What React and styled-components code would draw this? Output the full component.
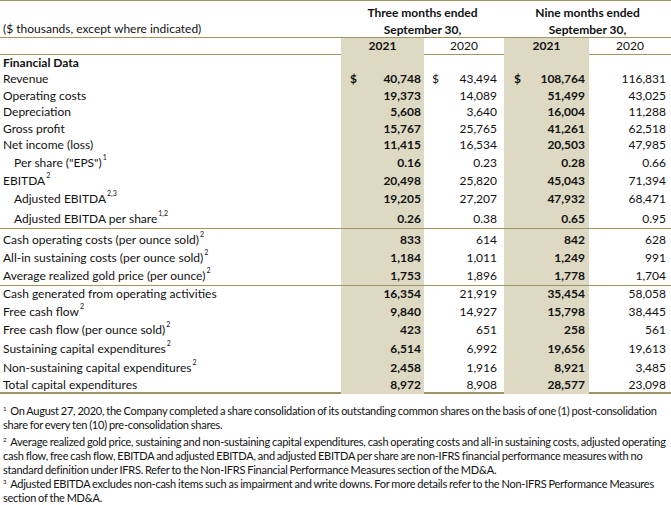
import React from "react";
import styled, { createGlobalStyle } from "styled-components";

const LINE = "#a09565";
const SHADE = "#ddd9c3";
const COLS = "341px 83px 80px 85px 82px";

const GlobalStyle = createGlobalStyle`
  html, body { margin: 0; padding: 0; background: #ffffff; }
  body { font-family: Lato, "Open Sans", sans-serif; color: #111; }
`;

const Page = styled.div`
  width: 671px;
  border-top: 1px solid ${LINE};
`;

const Row = styled.div`
  display: grid;
  grid-template-columns: ${COLS};
  height: ${(p) => p.$h}px;
  border-bottom: ${(p) => (p.$line ? `${p.$line}px solid ${LINE}` : "none")};
  font-size: 12px;
`;

const Label = styled.div`
  display: flex;
  align-items: flex-end;
  padding: 0 0 2px ${(p) => (p.$indent ? 14 : 3)}px;
  font-weight: ${(p) => (p.$bold ? 700 : 400)};
  white-space: nowrap;
`;

const Cell = styled.div`
  display: flex;
  align-items: flex-end;
  justify-content: space-between;
  padding: 0 ${(p) => p.$pr}px 2px ${(p) => p.$pl}px;
  background: ${(p) => (p.$shade ? SHADE : "transparent")};
  font-weight: ${(p) => (p.$bold ? 700 : 400)};
  white-space: nowrap;
`;

const Span = styled.div`
  grid-column: ${(p) => p.$col};
  display: flex;
  align-items: flex-end;
  justify-content: center;
  font-weight: 700;
  padding-bottom: 1px;
  white-space: nowrap;
`;

const Year = styled.div`
  display: flex;
  align-items: flex-end;
  justify-content: center;
  padding-bottom: 2px;
  background: ${(p) => (p.$shade ? SHADE : "transparent")};
  font-weight: ${(p) => (p.$shade ? 700 : 400)};
`;

const Sup = styled.span`
  font-size: 7px;
  line-height: 0;
  position: relative;
  top: -7px;
  margin-left: 1px;
`;

const Notes = styled.div`
  padding: 10px 3px 0 3px;
  font-size: 11px;
  line-height: 14px;
  letter-spacing: -0.25px;
  word-spacing: -0.5px;
  color: #111;
`;

const Note = styled.p`
  margin: 0 0 ${(p) => p.$gap || 0}px 0;
`;

const NoteSup = styled.span`
  font-size: 6px;
  line-height: 0;
  position: relative;
  top: -4px;
  margin-right: 4px;
`;

const rows = [
  { label: "Revenue", v: ["40,748", "43,494", "108,764", "116,831"], dollar: [1, 1, 1, 0], h: 17 },
  { label: "Operating costs", v: ["19,373", "14,089", "51,499", "43,025"], h: 16 },
  { label: "Depreciation", v: ["5,608", "3,640", "16,004", "11,288"], h: 17 },
  { label: "Gross profit", v: ["15,767", "25,765", "41,261", "62,518"], h: 16 },
  { label: "Net income (loss)", v: ["11,415", "16,534", "20,503", "47,985"], h: 17 },
  { label: 'Per share ("EPS")', sup: "1", indent: true, v: ["0.16", "0.23", "0.28", "0.66"], h: 18 },
  { label: "EBITDA", sup: "2", v: ["20,498", "25,820", "45,043", "71,394"], h: 18 },
  { label: "Adjusted EBITDA", sup: "2,3", indent: true, v: ["19,205", "27,207", "47,932", "68,471"], h: 18 },
  { label: "Adjusted EBITDA per share", sup: "1,2", indent: true, v: ["0.26", "0.38", "0.65", "0.95"], h: 20, line: 1 },
  { label: "Cash operating costs (per ounce sold)", sup: "2", v: ["833", "614", "842", "628"], h: 20 },
  { label: "All-in sustaining costs (per ounce sold)", sup: "2", v: ["1,184", "1,011", "1,249", "991"], h: 18 },
  { label: "Average realized gold price (per ounce)", sup: "2", v: ["1,753", "1,896", "1,778", "1,704"], h: 18, line: 1 },
  { label: "Cash generated from operating activities", v: ["16,354", "21,919", "35,454", "58,058"], h: 17 },
  { label: "Free cash flow", sup: "2", v: ["9,840", "14,927", "15,798", "38,445"], h: 18 },
  { label: "Free cash flow (per ounce sold)", sup: "2", v: ["423", "651", "258", "561"], h: 18 },
  { label: "Sustaining capital expenditures", sup: "2", v: ["6,514", "6,992", "19,656", "19,613"], h: 19 },
  { label: "Non-sustaining capital expenditures", sup: "2", v: ["2,458", "1,916", "8,921", "3,485"], h: 19 },
  { label: "Total capital expenditures", v: ["8,972", "8,908", "28,577", "23,098"], h: 15, line: 2 },
];

const cellCfg = [
  { shade: true, bold: true, pl: 9, pr: 3 },
  { shade: false, bold: false, pl: 8, pr: 7 },
  { shade: true, bold: true, pl: 10, pr: 4 },
  { shade: false, bold: false, pl: 8, pr: 5 },
];

export default function App() {
  return (
    <>
      <GlobalStyle />
      <Page>
        <Row $h={20}>
          <Label />
          <Span $col="2 / 4">Three months ended</Span>
          <Span $col="4 / 6">Nine months ended</Span>
        </Row>
        <Row $h={16} $line={1}>
          <Label>($ thousands, except where indicated)</Label>
          <Span $col="2 / 4">September 30,</Span>
          <Span $col="4 / 6">September 30,</Span>
        </Row>
        <Row $h={16} $line={1}>
          <Label />
          <Year $shade>2021</Year>
          <Year>2020</Year>
          <Year $shade>2021</Year>
          <Year>2020</Year>
        </Row>
        <Row $h={16}>
          <Label $bold>Financial Data</Label>
          <Cell $shade />
          <Cell />
          <Cell $shade />
          <Cell />
        </Row>
        {rows.map((r) => (
          <Row key={r.label} $h={r.h} $line={r.line}>
            <Label $indent={r.indent}>
              <span>
                {r.label}
                {r.sup && <Sup>{r.sup}</Sup>}
              </span>
            </Label>
            {r.v.map((val, i) => {
              const c = cellCfg[i];
              return (
                <Cell key={i} $shade={c.shade} $bold={c.bold} $pl={c.pl} $pr={c.pr}>
                  <span>{r.dollar && r.dollar[i] ? "$" : ""}</span>
                  <span>{val}</span>
                </Cell>
              );
            })}
          </Row>
        ))}
        <Notes>
          <Note $gap={3}>
            <NoteSup>1</NoteSup>On August 27, 2020, the Company completed a share consolidation of its outstanding common shares on the basis of one (1) post-consolidation share for every ten (10) pre-consolidation shares.
          </Note>
          <Note>
            <NoteSup>2</NoteSup>Average realized gold price, sustaining and non-sustaining capital expenditures, cash operating costs and all-in sustaining costs, adjusted operating cash flow, free cash flow, EBITDA and adjusted EBITDA, and adjusted EBITDA per share are non-IFRS financial performance measures with no standard definition under IFRS. Refer to the Non-IFRS Financial Performance Measures section of the MD&amp;A.
          </Note>
          <Note>
            <NoteSup>3</NoteSup>Adjusted EBITDA excludes non-cash items such as impairment and write downs. For more details refer to the Non-IFRS Performance Measures section of the MD&amp;A.
          </Note>
        </Notes>
      </Page>
    </>
  );
}
